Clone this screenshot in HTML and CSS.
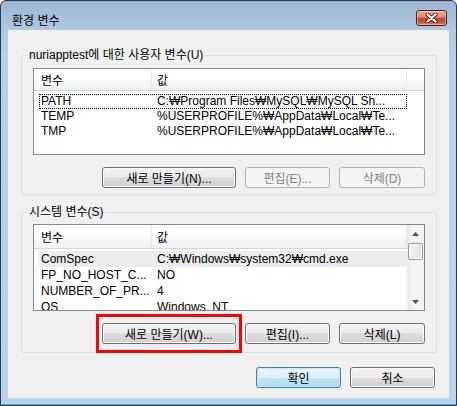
FILE: index.html
```html
<!DOCTYPE html>
<html lang="ko">
<head>
<meta charset="utf-8">
<title>환경 변수</title>
<link rel="stylesheet" href="styles.css">
</head>
<body>
<div class="window">
  <div class="titlebar">
    <span class="title">환경 변수</span>
    <div class="close">
      <svg width="13" height="10" viewBox="0 0 13 10"><path d="M2.5 1.5 L10.5 8.5 M10.5 1.5 L2.5 8.5" stroke="#4a2019" stroke-width="4" stroke-linecap="round"/><path d="M2.5 1.5 L10.5 8.5 M10.5 1.5 L2.5 8.5" stroke="#ffffff" stroke-width="2.2" stroke-linecap="round"/></svg>
    </div>
  </div>
  <div class="client">
    <fieldset class="group g-user">
      <legend>nuriapptest에 대한 사용자 변수(U)</legend>
      <div class="gbody">
        <div class="listview">
          <div class="lv-main">
            <div class="lv-header">
              <div class="hcol c1">변수</div>
              <div class="hcol c2">값</div>
              <div class="hfill"></div>
            </div>
            <div class="lv-rows">
              <div class="row focus"><span class="c1">PATH</span><span class="c2">C:₩Program Files₩MySQL₩MySQL Sh...</span></div>
              <div class="row"><span class="c1">TEMP</span><span class="c2">%USERPROFILE%₩AppData₩Local₩Te...</span></div>
              <div class="row"><span class="c1">TMP</span><span class="c2">%USERPROFILE%₩AppData₩Local₩Te...</span></div>
            </div>
          </div>
        </div>
        <div class="btnrow">
          <button class="btn wide">새로 만들기(N)...</button>
          <button class="btn" disabled>편집(E)...</button>
          <button class="btn w86" disabled>삭제(D)</button>
        </div>
      </div>
    </fieldset>

    <fieldset class="group g-sys">
      <legend>시스템 변수(S)</legend>
      <div class="gbody">
        <div class="listview">
          <div class="lv-main">
            <div class="lv-header">
              <div class="hcol c1">변수</div>
              <div class="hcol c2">값</div>
            </div>
            <div class="lv-rows">
              <div class="row sel"><span class="c1">ComSpec</span><span class="c2">C:₩Windows₩system32₩cmd.exe</span></div>
              <div class="row"><span class="c1">FP_NO_HOST_C...</span><span class="c2">NO</span></div>
              <div class="row"><span class="c1">NUMBER_OF_PR...</span><span class="c2">4</span></div>
              <div class="row"><span class="c1">OS</span><span class="c2">Windows_NT</span></div>
            </div>
          </div>
          <div class="scrollbar">
            <div class="sb-btn"><svg width="7" height="4" viewBox="0 0 7 4"><path d="M3.5 0 L7 4 L0 4 Z" fill="#4f4f4f"/></svg></div>
            <div class="sb-thumb"></div>
            <div class="sb-track"></div>
            <div class="sb-btn"><svg width="7" height="4" viewBox="0 0 7 4"><path d="M0 0 L7 0 L3.5 4 Z" fill="#4f4f4f"/></svg></div>
          </div>
        </div>
        <div class="btnrow">
          <div class="mark-wrap"><button class="btn wide">새로 만들기(W)...</button></div>
          <button class="btn">편집(I)...</button>
          <button class="btn w86">삭제(L)</button>
        </div>
      </div>
    </fieldset>

    <div class="dlg">
      <button class="btn default">확인</button>
      <button class="btn">취소</button>
    </div>
  </div>
</div>
</body>
</html>
```

FILE: styles.css
```css
* { box-sizing: border-box; }
html, body { margin: 0; padding: 0; }
body {
  background: #ffffff;
  font-family: "Liberation Sans", "Noto Sans CJK KR", sans-serif;
  font-size: 12px;
  color: #000;
}

.window {
  width: 457px;
  height: 406px;
  border: 1px solid #2c3a48;
  border-radius: 6px 6px 0 0;
  background: linear-gradient(#9cb6d2 0px, #aec7e1 26px, #b9d0e9 60px, #bcd3eb 100%);
  display: flex;
  flex-direction: column;
  box-shadow: inset 0 -1px 0 #3fb8d8;
}

.titlebar {
  height: 29px;
  flex: none;
  display: flex;
  justify-content: space-between;
  align-items: flex-start;
  padding: 0 9px 0 11px;
}
.title {
  font-family: "Noto Sans CJK KR", sans-serif;
  font-size: 12px;
  line-height: 15px;
  margin-top: 11px;
  color: #000;
}
.close {
  width: 31px;
  height: 16px;
  margin-top: 9px;
  border: 1px solid #5a1d16;
  border-radius: 3px;
  background: linear-gradient(#eaa898 0%, #dc8a77 42%, #c2442d 55%, #c94f37 78%, #dc8670 100%);
  box-shadow: inset 0 0 0 1px rgba(255, 220, 210, 0.45);
  display: flex;
  align-items: center;
  justify-content: center;
}

.client {
  height: 368px;
  flex: none;
  margin: 0 7px;
  background: #f0f0f0;
  padding: 0 12px 0 13px;
  display: flex;
  flex-direction: column;
}

.group {
  padding: 0;
  min-width: 0;
  border: 1px solid #d5dfe5;
  border-radius: 3px;
  margin: 0;
}
.group.g-user { margin-top: 18px; }
.group.g-sys { margin-top: 10px; }
legend {
  margin-left: 5px;
  padding: 0 2px;
  line-height: 15px;
  font-size: 12px;
}
.gbody { padding: 5px 11px 6px; }
.g-sys .gbody { padding: 4px 11px 8px; }

.listview {
  height: 87px;
  border: 1px solid #828790;
  background: #fff;
  display: flex;
  overflow: hidden;
}
.lv-main {
  flex: 1;
  min-width: 0;
  overflow: hidden;
}
.lv-header {
  height: 22px;
  display: flex;
  border-bottom: 1px solid #d5d5d5;
  background: linear-gradient(#ffffff 0%, #ffffff 50%, #f7f8fa 50%, #f1f2f4 100%);
}
.g-sys .lv-header { height: 24px; }
.hcol {
  display: flex;
  align-items: center;
  border-right: 1px solid #e3e8ee;
  padding-left: 7px;
}
.hcol.c1 { width: 118px; }
.hcol.c2 { width: 255px; padding-left: 5px; }
.hfill { flex: 1; }

.lv-rows { padding-top: 3px; }
.g-sys .lv-rows { padding-top: 2px; }
.row {
  margin-left: 5px;
  width: 368px;
  height: 15px;
  display: grid;
  grid-template-columns: 112px 1fr;
  align-items: center;
  border: 1px dotted transparent;
  white-space: nowrap;
  line-height: 13px;
}
.g-sys .row { height: 16px; line-height: 14px; }
.row.focus { border-color: #000; }
.row.sel { background: #ececec; }
.row .c1 { padding-left: 1px; overflow: hidden; }
.row .c2 { padding-left: 5px; overflow: hidden; }

.scrollbar {
  width: 17px;
  flex: none;
  display: flex;
  flex-direction: column;
  background: linear-gradient(90deg, #e9e9e9 0%, #f4f4f4 40%, #f4f4f4 100%);
}
.sb-btn {
  height: 17px;
  flex: none;
  display: flex;
  align-items: center;
  justify-content: center;
}
.sb-thumb {
  flex: none;
  height: 17px;
  margin: 1px 1px 0;
  border: 1px solid #979797;
  border-radius: 2px;
  background: linear-gradient(90deg, #f3f3f3 0%, #ececec 50%, #dedede 100%);
  box-shadow: inset 0 0 0 1px #fafafa;
}
.sb-track { flex: 1; }

.btnrow {
  display: flex;
  justify-content: flex-end;
  gap: 9px;
  margin-top: 12px;
}
.btn {
  width: 85px;
  height: 21px;
  padding: 0;
  margin: 0;
  font-family: "Liberation Sans", "Noto Sans CJK KR", sans-serif;
  font-size: 12px;
  color: #000;
  border: 1px solid #707070;
  border-radius: 3px;
  background: linear-gradient(#f2f2f2 0%, #ebebeb 50%, #dddddd 50%, #cfcfcf 100%);
  box-shadow: inset 0 0 0 1px #fbfbfb;
}
.btn.wide { width: 134px; }
.btn.w86 { width: 86px; }
.btn:disabled {
  border-color: #adb2b5;
  background: #f4f4f4;
  color: #838383;
  box-shadow: none;
}
.btn.default {
  border-color: #3c7fb1;
  background: linear-gradient(#eaf6fd 0%, #dcf0fb 50%, #c4e4f6 50%, #b2daf0 100%);
  box-shadow: inset 0 0 0 1px #c6e8fa;
}

.mark-wrap { position: relative; display: flex; }
.mark-wrap::after {
  content: "";
  position: absolute;
  left: -6px;
  right: -6px;
  top: -9px;
  bottom: -9px;
  border: 3px solid #ff0000;
  pointer-events: none;
}

.dlg {
  display: flex;
  justify-content: flex-end;
  gap: 9px;
  margin-top: 14px;
  padding-right: 2px;
}
```
